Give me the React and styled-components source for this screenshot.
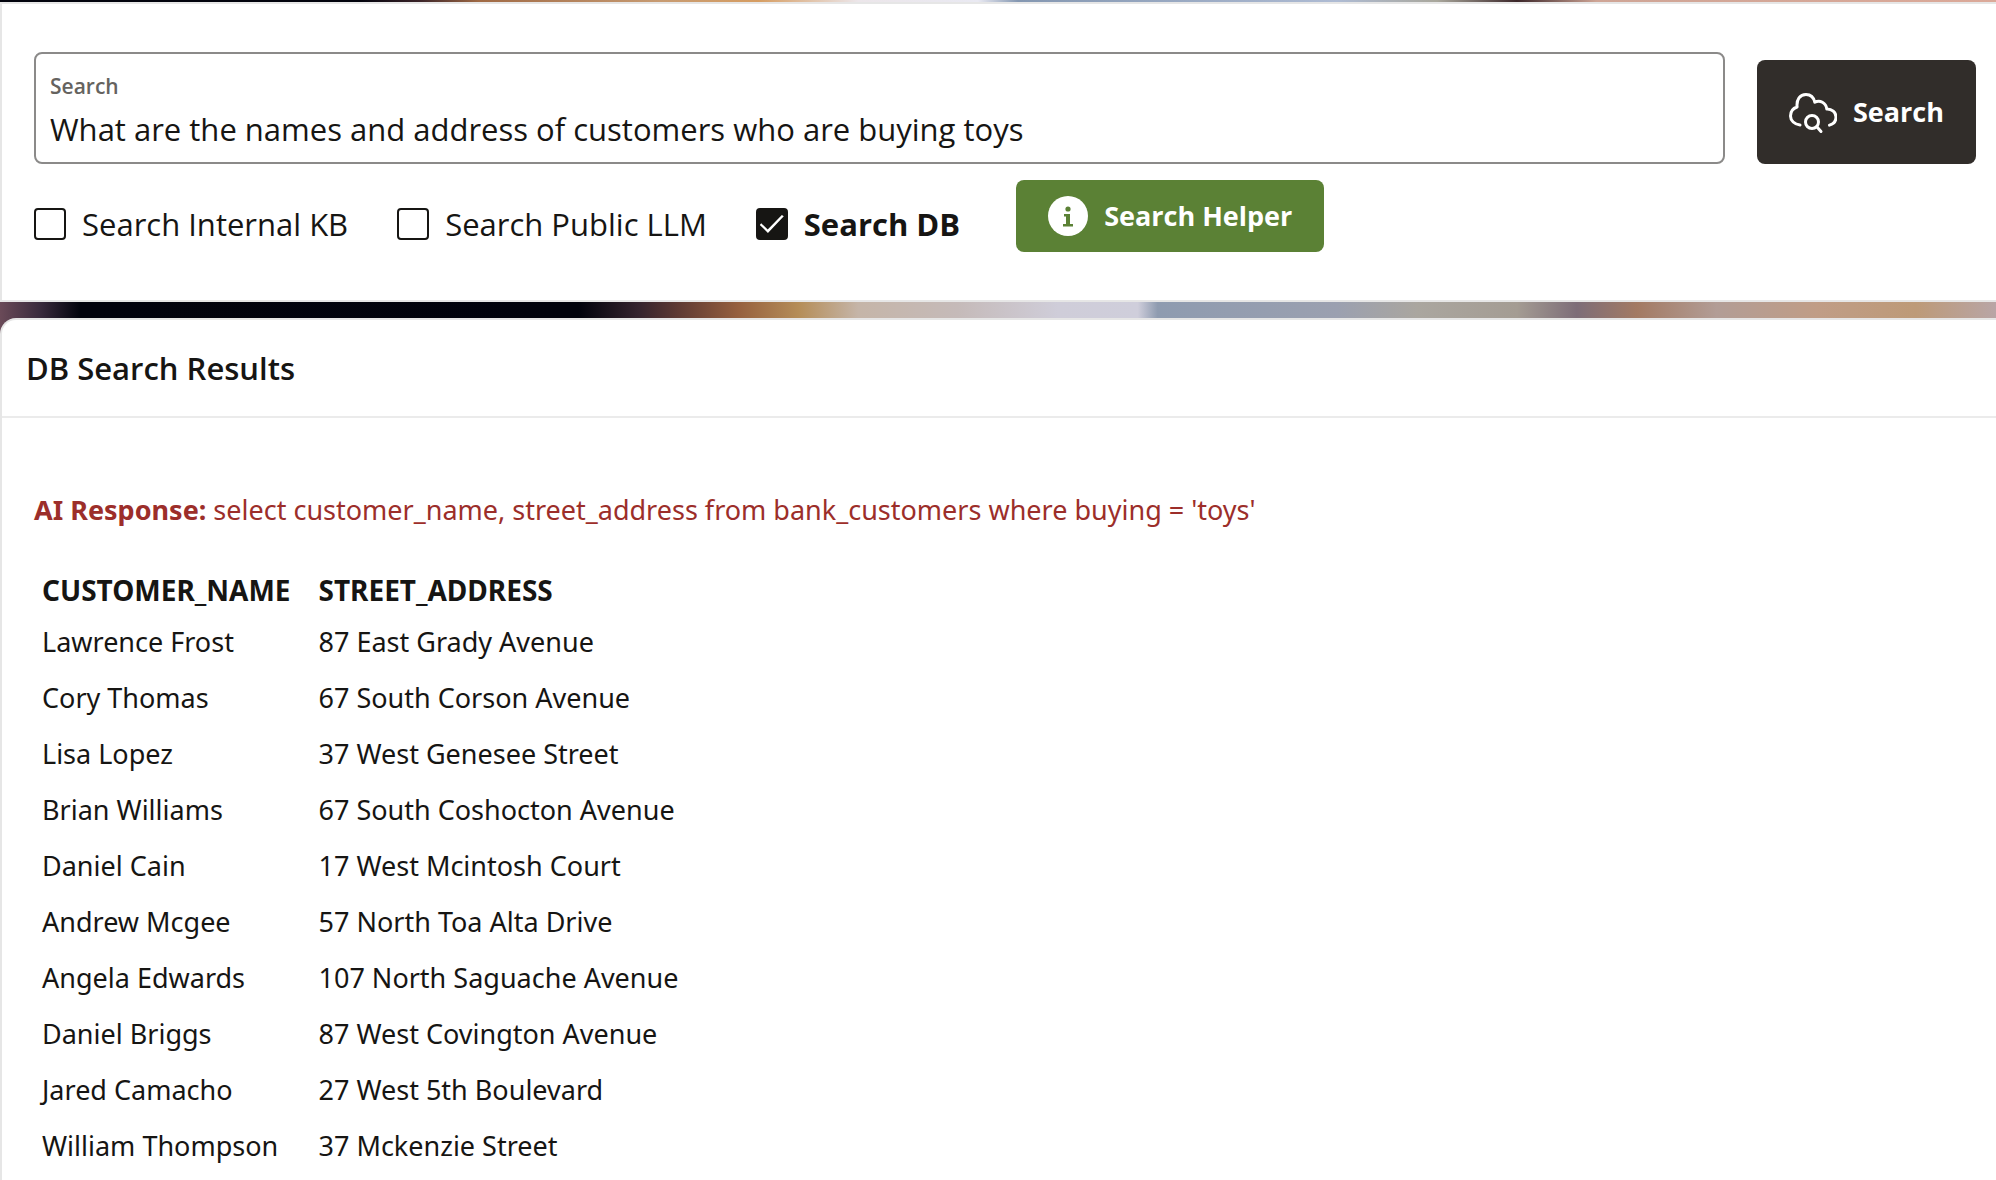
import React, { useState } from "react";
import styled, { createGlobalStyle } from "styled-components";

const GlobalStyle = createGlobalStyle`
  *, *::before, *::after { box-sizing: border-box; }
  body {
    margin: 0;
    background: #ffffff;
    color: #161513;
    font-family: "Open Sans", "Noto Sans", sans-serif;
    font-size: 27px;
    line-height: 40px;
  }
`;

const Page = styled.main`
  display: flex;
  flex-direction: column;
  gap: 16px;
  min-height: 100vh;
  padding-top: 2px;
  background:
    linear-gradient(90deg, #02030d 0%, #02030d 18%, #3a2328 21%, #a06a45 24%, #c79b72 33%, #d69d62 38%, #ece6ea 43%, #e9e9f2 49%, #8497b1 51%, #aebbd3 67%, #a9a79c 72%, #3b2629 76%, #cfa596 80%, #dba999 100%) 0 0 / 100% 2px no-repeat,
    linear-gradient(90deg, #6a4a58 0%, #3a2b3d 2%, #02030d 4%, #01020c 29%, #35242e 32%, #5f3a33 34%, #96603f 37%, #b58d58 40%, #c5b5a8 43%, #c5bab9 48%, #cfcdd9 53%, #cfcedb 57%, #8e9bb0 58%, #9ba0b0 67%, #aaa69f 71%, #a49c93 76%, #7d6d78 79%, #a37a63 82%, #b29d96 86%, #c09d86 91%, #bd9a78 96%, #b8a5a6 100%);
`;

const Card = styled.section`
  background: #ffffff;
  border: 2px solid #e6e6e6;
  border-right: 0;
`;

const SearchCard = styled(Card)`
  padding: 48px 20px 48px 32px;
`;

const ResultsCard = styled(Card)`
  flex: 1;
  border-bottom: 0;
  border-top-left-radius: 16px;
`;

const SearchRow = styled.form`
  display: flex;
  align-items: flex-end;
  gap: 32px;
`;

const Field = styled.div`
  display: flex;
  flex: 1;
  flex-direction: column;
  height: 112px;
  padding: 16px 14px 6px;
  border: 2px solid #8b8a89;
  border-radius: 8px;
`;

const FieldLabel = styled.label`
  color: #65635f;
  font-size: 21px;
  font-weight: 600;
  line-height: 32px;
`;

const FieldInput = styled.input`
  width: 100%;
  height: 58px;
  padding: 0;
  border: 0;
  outline: 0;
  background: transparent;
  color: inherit;
  font: inherit;
  font-size: 31px;
`;

const Button = styled.button`
  display: inline-flex;
  align-items: center;
  gap: 16px;
  height: ${(p) => p.$height}px;
  padding: 0 32px;
  border: 0;
  border-radius: 8px;
  background: ${(p) => p.$color};
  color: #ffffff;
  font: inherit;
  font-weight: 700;
  cursor: pointer;
`;

const Options = styled.div`
  display: flex;
  align-items: flex-start;
  gap: 56px;
  padding-top: 16px;
`;

const OptionList = styled.div`
  display: flex;
  gap: 49px;
  padding-top: 24px;
`;

const Option = styled.label`
  display: flex;
  align-items: center;
  gap: 16px;
  font-size: 31px;
  font-weight: ${(p) => (p.$on ? 700 : 400)};
`;

const Tick = styled.input`
  appearance: none;
  display: grid;
  place-content: center;
  width: 32px;
  height: 32px;
  margin: 0;
  border: 2px solid #161513;
  border-radius: 4px;

  &:checked { background: #161513; }

  &:checked::before {
    content: "";
    width: 24px;
    height: 18px;
    background: #ffffff;
    clip-path: polygon(0 55%, 6% 46%, 33% 80%, 92% 0, 100% 7%, 34% 100%);
  }
`;

const CardHeader = styled.header`
  padding: 28px 24px;
  border-bottom: 2px solid #ebebeb;
`;

const Title = styled.h2`
  margin: 0;
  font-size: 31px;
  font-weight: 600;
  line-height: 40px;
`;

const Body = styled.div`
  padding: 72px 32px 0;
  font-family: "Noto Sans", "Open Sans", sans-serif;
`;

const Response = styled.p`
  margin: 0 0 36px;
  color: #9c2e2a;
`;

const Table = styled.table`
  margin-left: 8px;
  border-spacing: 0;
`;

const HeadCell = styled.th`
  height: 48px;
  padding: 0 28px 0 0;
  font-size: 28px;
  font-weight: 700;
  text-align: left;
`;

const Cell = styled.td`
  height: 56px;
  padding: 0 28px 0 0;
`;

const CloudSearchIcon = () => (
  <svg width="48" height="48" viewBox="0 0 48 48" fill="none" stroke="#ffffff" strokeWidth="3" strokeLinecap="round" strokeLinejoin="round" aria-hidden="true">
    <path d="M11 37C5.500 36.500 1.500 32.500 1.500 28c0-4.500 2.700-7.700 6.600-9C7.300 11.500 11 6.500 17 6.500c4.600 0 7.800 3.200 8.800 7.800 5-2.700 11.200.4 12 6.700 5-.2 9.200 3.300 9.200 8 0 4.200-2.700 7.200-6.500 8.100" />
    <circle cx="23" cy="34" r="6.500" />
    <path d="M27.800 38.700L32 43.500" />
  </svg>
);

const InfoIcon = () => (
  <svg width="40" height="40" viewBox="0 0 40 40" aria-hidden="true">
    <circle cx="20" cy="20" r="20" fill="#ffffff" />
    <circle cx="20" cy="13" r="2.600" fill="#5b8135" />
    <path d="M16 18h6v10h3v2.500H15V28h3v-7.500h-2z" fill="#5b8135" />
  </svg>
);

const rows = [
  ["Lawrence Frost", "87 East Grady Avenue"],
  ["Cory Thomas", "67 South Corson Avenue"],
  ["Lisa Lopez", "37 West Genesee Street"],
  ["Brian Williams", "67 South Coshocton Avenue"],
  ["Daniel Cain", "17 West Mcintosh Court"],
  ["Andrew Mcgee", "57 North Toa Alta Drive"],
  ["Angela Edwards", "107 North Saguache Avenue"],
  ["Daniel Briggs", "87 West Covington Avenue"],
  ["Jared Camacho", "27 West 5th Boulevard"],
  ["William Thompson", "37 Mckenzie Street"],
];

const sources = ["Search Internal KB", "Search Public LLM", "Search DB"];

export default function App() {
  const [query, setQuery] = useState("What are the names and address of customers who are buying toys");
  const [picked, setPicked] = useState(["Search DB"]);

  const toggle = (name) =>
    setPicked((now) => (now.includes(name) ? now.filter((n) => n !== name) : [...now, name]));

  return (
    <>
      <GlobalStyle />
      <Page>
        <SearchCard>
          <SearchRow onSubmit={(e) => e.preventDefault()}>
            <Field>
              <FieldLabel htmlFor="query">Search</FieldLabel>
              <FieldInput id="query" type="text" value={query} onChange={(e) => setQuery(e.target.value)} />
            </Field>
            <Button type="submit" $height={104} $color="#312d2a">
              <CloudSearchIcon />
              Search
            </Button>
          </SearchRow>
          <Options>
            <OptionList>
              {sources.map((name) => (
                <Option key={name} $on={picked.includes(name)}>
                  <Tick type="checkbox" checked={picked.includes(name)} onChange={() => toggle(name)} />
                  {name}
                </Option>
              ))}
            </OptionList>
            <Button type="button" $height={72} $color="#5b8135">
              <InfoIcon />
              Search Helper
            </Button>
          </Options>
        </SearchCard>
        <ResultsCard>
          <CardHeader>
            <Title>DB Search Results</Title>
          </CardHeader>
          <Body>
            <Response>
              <strong>AI Response:</strong> select customer_name, street_address from bank_customers where buying = 'toys'
            </Response>
            <Table>
              <thead>
                <tr>
                  <HeadCell scope="col">CUSTOMER_NAME</HeadCell>
                  <HeadCell scope="col">STREET_ADDRESS</HeadCell>
                </tr>
              </thead>
              <tbody>
                {rows.map(([name, address]) => (
                  <tr key={name}>
                    <Cell>{name}</Cell>
                    <Cell>{address}</Cell>
                  </tr>
                ))}
              </tbody>
            </Table>
          </Body>
        </ResultsCard>
      </Page>
    </>
  );
}
